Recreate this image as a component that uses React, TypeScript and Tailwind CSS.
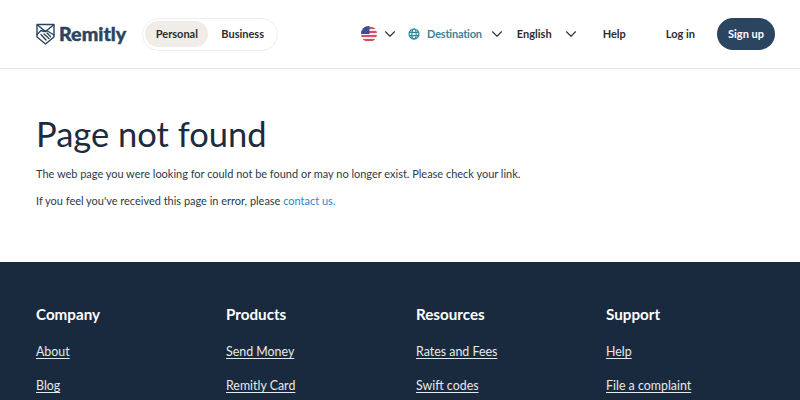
import { ChevronDown } from 'lucide-react';

const columns = [
  { title: 'Company', links: ['About', 'Blog'] },
  { title: 'Products', links: ['Send Money', 'Remitly Card'] },
  { title: 'Resources', links: ['Rates and Fees', 'Swift codes'] },
  { title: 'Support', links: ['Help', 'File a complaint'] },
];

function Logo() {
  return (
    <svg width="19" height="22" viewBox="0 0 19 22" fill="none" stroke="#2b4560" strokeWidth="1.4" strokeLinejoin="round" strokeLinecap="round">
      <path d="M1 1.500h17v12.500l-8.500 7-8.500-7z" />
      <path d="M1.500 2l8 6.500 8-6.500" />
      <path d="M1 11.500l4-4 3 1 2.500-1 7.500 4.500" />
      <path d="M5 11.500l5 5.500M8 11l5 4.500M11 10l3.500 3.500" />
    </svg>
  );
}

function Flag() {
  return (
    <svg width="16" height="16" viewBox="0 0 16 16">
      <defs>
        <clipPath id="flag-circle">
          <circle cx="8" cy="8" r="8" />
        </clipPath>
      </defs>
      <g clipPath="url(#flag-circle)">
        <rect width="16" height="16" fill="#f1eef0" />
        <rect y="1" width="16" height="2" fill="#d8505f" />
        <rect y="5" width="16" height="2" fill="#d8505f" />
        <rect y="9" width="16" height="2" fill="#d8505f" />
        <rect y="13" width="16" height="2" fill="#d8505f" />
        <rect width="8.500" height="8" fill="#3d4f8f" />
      </g>
    </svg>
  );
}

function Globe() {
  return (
    <svg className="block" width="12" height="12" viewBox="0 0 12 12" fill="none" stroke="#2b8a9a" strokeWidth="1.200">
      <circle cx="6" cy="6" r="5" />
      <ellipse cx="6" cy="6" rx="2.200" ry="5" />
      <path d="M1 4.300h10M1 7.700h10" />
    </svg>
  );
}

export default function App() {
  return (
    <div className="h-[400px] overflow-hidden bg-white font-['Lato','Liberation_Sans',sans-serif]">
      <header className="flex h-[69px] items-center border-b border-[#e4e4e4] pl-9 pr-[25px]">
        <div className="flex items-center gap-[4px]">
          <Logo />
          <span className="text-[19.700px] font-black leading-none text-[#2b4560] [-webkit-text-stroke:0.4px_#2b4560]">Remitly</span>
        </div>
        <div className="ml-[16px] flex h-[33px] w-[136px] items-center rounded-full border border-[#eeeeee] pl-[2px] text-[11px] font-bold text-[#2c2c2c]">
          <span className="flex h-[26px] w-[63px] items-center justify-center rounded-full bg-[#f0ede9]">Personal</span>
          <span className="ml-[13px]">Business</span>
        </div>
        <div className="ml-auto flex items-center text-[11px] font-bold text-[#2c2c2c]">
          <Flag />
          <ChevronDown strokeWidth={1.5} className="ml-[4px] h-[18px] w-[18px] text-[#333333]" />
          <span className="ml-[9px]"><Globe /></span>
          <span className="ml-[7px] tracking-[-0.2px] text-[#3d8493]">Destination</span>
          <ChevronDown strokeWidth={1.5} className="ml-[6px] h-[18px] w-[18px] text-[#333333]" />
          <span className="ml-[11px]">English</span>
          <ChevronDown strokeWidth={1.5} className="ml-[10px] h-[18px] w-[18px] text-[#333333]" />
          <span className="ml-[23px]">Help</span>
          <span className="ml-[40px]">Log in</span>
          <span className="ml-[22px] flex h-8 w-[58px] items-center justify-center rounded-full bg-[#2b4560] text-white">Sign up</span>
        </div>
      </header>
      <main className="h-[193px] px-9 pt-[44px]">
        <h1 className="text-[34.500px] font-normal leading-[42px] text-[#1c2b3d]">Page not found</h1>
        <p className="mt-[11px] text-[10.970px] leading-[16px] text-[#2c3a48]">
          The web page you were looking for could not be found or may no longer exist. Please check your link.
        </p>
        <p className="mt-[11px] text-[10.970px] leading-[16px] text-[#2c3a48]">
          If you feel you've received this page in error, please <span className="text-[#2b87d1]">contact us.</span>
        </p>
      </main>
      <footer className="grid h-[138px] grid-cols-[190px_190px_190px_190px] bg-[#1a2a3e] px-9 pt-[43px] text-white">
        {columns.map((col) => (
          <div key={col.title}>
            <h2 className="text-[15.200px] font-bold leading-[18px]">{col.title}</h2>
            <ul className="mt-[21px] flex flex-col gap-[18px]">
              {col.links.map((link) => (
                <li key={link} className="text-[12.400px] leading-[16px] text-[#e6e9ec] underline underline-offset-2">{link}</li>
              ))}
            </ul>
          </div>
        ))}
      </footer>
    </div>
  );
}
